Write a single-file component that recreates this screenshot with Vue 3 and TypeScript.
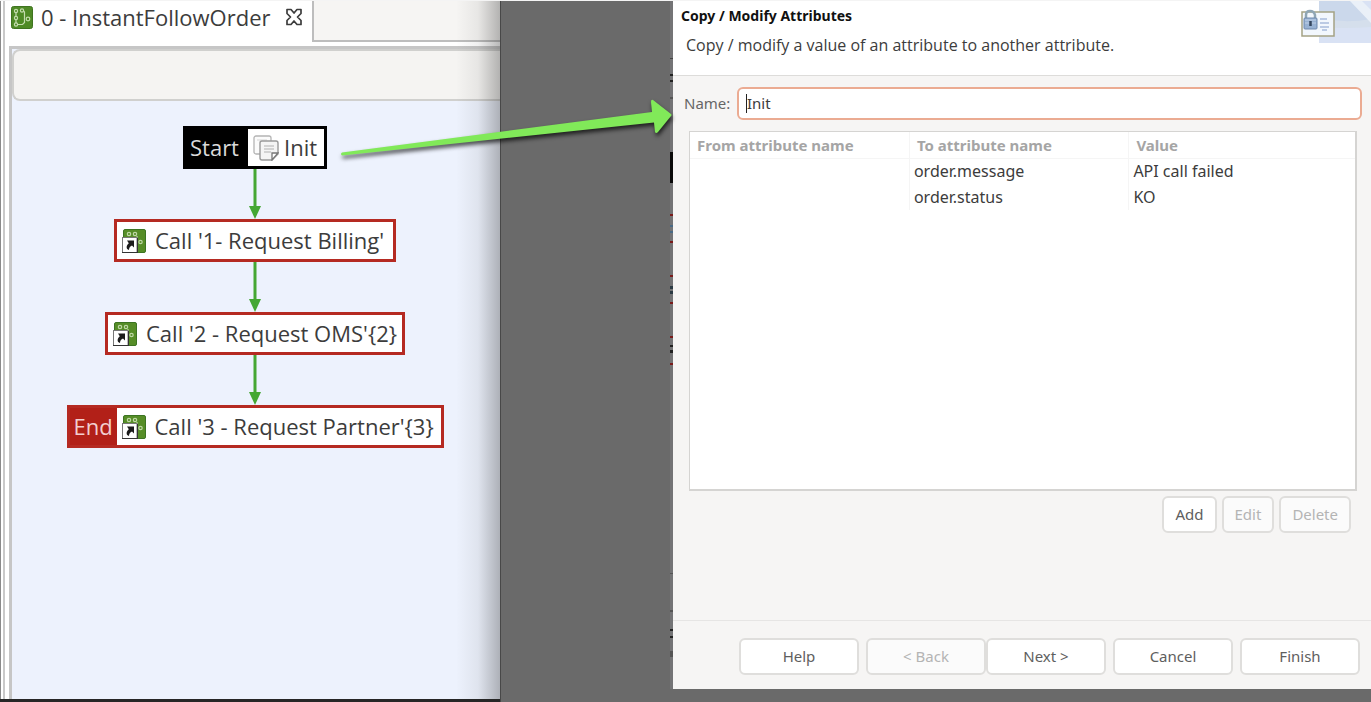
<script setup lang="ts">
import { ref } from 'vue'

interface FlowNode {
  id: string
  label: string
  kind: 'start' | 'call' | 'end'
  tag?: string
}

interface AttributeRow {
  from: string
  to: string
  value: string
}

interface Mark {
  y: number
  h: number
  color: string
}

const nodes: FlowNode[] = [
  { id: 'init', label: 'Init', kind: 'start', tag: 'Start' },
  { id: 'billing', label: "Call '1- Request Billing'", kind: 'call' },
  { id: 'oms', label: "Call '2 - Request OMS'{2}", kind: 'call' },
  { id: 'partner', label: "Call '3 - Request Partner'{3}", kind: 'end', tag: 'End' },
]

const rows: AttributeRow[] = [
  { from: '', to: 'order.message', value: 'API call failed' },
  { from: '', to: 'order.status', value: 'KO' },
]

const marks: Mark[] = [
  { y: 57, h: 1, color: '#444' },
  { y: 73, h: 2, color: '#222' },
  { y: 79, h: 2, color: '#222' },
  { y: 96, h: 2, color: '#555' },
  { y: 151, h: 31, color: '#0a0a0a' },
  { y: 213, h: 2, color: '#7a1a1a' },
  { y: 224, h: 2, color: '#4a6a85' },
  { y: 230, h: 2, color: '#4a6a85' },
  { y: 240, h: 2, color: '#7a1a1a' },
  { y: 274, h: 2, color: '#7a1a1a' },
  { y: 285, h: 3, color: '#2c3a44' },
  { y: 290, h: 3, color: '#2c3a44' },
  { y: 301, h: 2, color: '#7a1a1a' },
  { y: 335, h: 2, color: '#7a1a1a' },
  { y: 344, h: 2, color: '#222' },
  { y: 349, h: 3, color: '#222' },
  { y: 362, h: 2, color: '#7a1a1a' },
  { y: 572, h: 1, color: '#555' },
  { y: 609, h: 2, color: '#555' },
  { y: 628, h: 2, color: '#222' },
  { y: 635, h: 2, color: '#222' },
  { y: 650, h: 6, color: '#555' },
]

const name = ref('Init')
</script>

<template>
  <div class="screen">
    <section class="editor">
      <div class="tabs">
        <div class="tab">
          <svg class="tab-icon" viewBox="0 0 22 23" aria-hidden="true">
            <rect x="0.5" y="0.5" width="21" height="22" rx="2" fill="#4f8a26" stroke="#3f7420" />
            <g fill="none" stroke="#c4dcae" stroke-width="1.2">
              <circle cx="5" cy="5" r="1.6" />
              <circle cx="11" cy="4.5" r="1.6" />
              <circle cx="5" cy="12" r="1.6" />
              <circle cx="5" cy="18.5" r="1.6" />
              <circle cx="17" cy="13" r="1.8" />
              <path d="M5 7v3M5 14v3M7 18.5h4.500l2-2V6l-1-1" />
            </g>
          </svg>
          <span>0 - InstantFollowOrder</span>
          <button class="close" type="button" aria-label="Close tab">
            <svg viewBox="0 0 18 18" aria-hidden="true">
              <path
                d="M2 1.500h4L9 5l3-3.500h4v4L12.500 9l3.500 3.500v4h-4L9 13l-3 3.500H2v-4L5.500 9 2 5.500z"
                fill="#fff" stroke="#3c3c3c" stroke-width="1.700" stroke-linejoin="round"
              />
            </svg>
          </button>
        </div>
        <div class="tab-rest"></div>
      </div>
      <div class="frame">
        <div class="toolbar"></div>
        <div class="canvas">
          <template v-for="(node, index) in nodes" :key="node.id">
            <svg v-if="index > 0" class="link" viewBox="0 0 12 50" aria-hidden="true">
              <path d="M6 0v40" stroke="#45a733" stroke-width="3" />
              <path d="M0 37h12L6 50z" fill="#45a733" />
            </svg>
            <div class="node" :class="[node.kind, node.id]">
              <span v-if="node.tag" class="tag">{{ node.tag }}</span>
              <div class="body">
                <svg v-if="node.kind === 'start'" class="copy-icon" viewBox="0 0 26 26" aria-hidden="true">
                  <rect x="1" y="1" width="17" height="18" rx="2" fill="#fbfbfb" stroke="#b4b4b4" stroke-width="1.300" />
                  <path d="M4 5h10" stroke="#d5d5d5" />
                  <path
                    d="M9 6h14q2 0 2 2v11l-6 6H9q-2 0-2-2V8q0-2 2-2z"
                    fill="#f4f4f4" stroke="#999" stroke-width="1.400"
                  />
                  <path d="M11 11h10M11 14h10M11 17h7" stroke="#b0b0b0" stroke-width="1.200" />
                  <path d="M25 18h-6v7z" fill="#fff" stroke="#777" stroke-width="1.300" />
                </svg>
                <svg v-else class="call-icon" viewBox="0 0 24 24" aria-hidden="true">
                  <rect x="1.500" y="0.500" width="22" height="23" rx="1.500" fill="#568d27" stroke="#3c7422" />
                  <g fill="none" stroke="#bfd8a6" stroke-width="1.200">
                    <circle cx="7" cy="5" r="1.700" />
                    <circle cx="13" cy="5" r="1.700" />
                    <circle cx="18.500" cy="13" r="1.700" />
                    <path d="M15 7v2" />
                  </g>
                  <rect x="0.500" y="8.500" width="14.500" height="15" fill="#fff" stroke="#777" />
                  <path d="M0 23.500h16M15.500 9v15" stroke="#333" />
                  <path d="M5 11.500h7v7l-2-2c-2 1-3 2-3 4.500-3-1-3.200-4-0.200-6.800z" fill="#1b1b1b" />
                </svg>
                <span class="label">{{ node.label }}</span>
              </div>
            </div>
          </template>
        </div>
      </div>
      <div class="edge-shade"></div>
    </section>

    <div class="gap">
      <div class="strip">
        <svg viewBox="0 0 3 701" aria-hidden="true">
          <rect x="0" y="0" width="3" height="688" fill="#747476" />
          <rect v-for="mark in marks" :key="mark.y" x="0" :y="mark.y" width="3" :height="mark.h" :fill="mark.color" />
        </svg>
      </div>
      <svg class="pointer" viewBox="0 0 340 70" aria-hidden="true">
        <path
          d="M11 61.500Q9 63 11 64.500L323 31.500 324 41Q325 43 327 41L340 25Q341 24 340 23L322 9Q320 8 320 11L321 21z"
          fill="#81e959"
        />
      </svg>
    </div>

    <section class="dialog" aria-labelledby="dialog-title">
      <header class="head">
        <div>
          <h1 id="dialog-title">Copy / Modify Attributes</h1>
          <p>Copy / modify a value of an attribute to another attribute.</p>
        </div>
        <svg class="banner" viewBox="0 0 70 42" aria-hidden="true">
          <rect x="18" y="0" width="52" height="42" fill="#d9e2f4" />
          <path d="M18 0h35l22 26-57-2z" fill="#cbd8eb" />
          <path d="M18 17q26 6 52 1v8q-26 2-52 0z" fill="#d5dfec" />
          <path d="M49 0h12l9 9v13z" fill="#eaf0f8" />
          <rect x="1" y="11" width="32" height="24" fill="#f2f7fd" stroke="#a4a284" stroke-width="1.500" />
          <path d="M19 18h7M19 22h9M19 26h9M21 29h5" stroke="#a9bcdb" stroke-width="1.300" />
          <path d="M5 18v-4q0-4 4-4t5 4v4" fill="none" stroke="#8fa6b4" stroke-width="2.500" />
          <rect x="3" y="17" width="13" height="11" rx="1" fill="#98b2d3" stroke="#6f89ad" />
          <path d="M4 19h11M4 22h11" stroke="#bfd0e6" />
          <path d="M9.500 20v5" stroke="#35465e" stroke-width="2.500" />
        </svg>
      </header>

      <div class="content">
        <div class="name-row">
          <label for="attr-name">Name:</label>
          <div class="field">
            <input id="attr-name" v-model="name" type="text" />
            <span class="caret"></span>
          </div>
        </div>
        <div class="list">
          <table>
            <thead>
              <tr>
                <th scope="col">From attribute name</th>
                <th scope="col">To attribute name</th>
                <th scope="col">Value</th>
              </tr>
            </thead>
            <tbody>
              <tr v-for="row in rows" :key="row.to">
                <td>{{ row.from }}</td>
                <td>{{ row.to }}</td>
                <td>{{ row.value }}</td>
              </tr>
            </tbody>
          </table>
        </div>
        <div class="row-actions">
          <button type="button">Add</button>
          <button type="button" disabled>Edit</button>
          <button type="button" disabled>Delete</button>
        </div>
      </div>

      <footer class="foot">
        <button type="button">Help</button>
        <div class="pair">
          <button type="button" disabled>&lt; Back</button>
          <button type="button">Next &gt;</button>
        </div>
        <button type="button">Cancel</button>
        <button type="button">Finish</button>
      </footer>
    </section>
  </div>
</template>

<style>
html,
body {
  background: #6a6a6a;
}
</style>

<style scoped>
.screen {
  box-sizing: border-box;
  display: grid;
  grid-template-columns: minmax(0, 500fr) minmax(0, 173fr) minmax(0, 698fr);
  min-height: 100vh;
  border-top: 1px solid #f4f4f4;
  background: #6a6a6a;
  font-family: 'Open Sans', 'Noto Sans', sans-serif;
  color: #3c3c3c;
}

.screen * {
  box-sizing: border-box;
}

button,
input {
  font: inherit;
  color: inherit;
}

.editor {
  position: relative;
  display: flex;
  flex-direction: column;
  overflow: hidden;
  border-bottom: 3px solid #262626;
  background: linear-gradient(90deg, #8a8a8a 1px, #fff 1px, #fff 3px, #c9c9c9 3px, #c9c9c9 5px, #fff 5px);
}

.tabs {
  display: flex;
  height: 41px;
  margin-left: 5px;
}

.tab {
  display: flex;
  align-items: center;
  gap: 8px;
  width: 307px;
  padding: 0 6px 9px;
  font-size: 22px;
  white-space: nowrap;
}

.tab-icon {
  width: 22px;
  height: 23px;
}

.close {
  display: flex;
  margin-left: 6px;
  padding: 0;
  border: 0;
  background: none;
}

.close svg {
  width: 18px;
  height: 18px;
}

.tab-rest {
  flex: 1;
  border-left: 2px solid #bdbdbd;
  border-bottom: 2px solid #bdbdbd;
  background: #f6f5f3;
}

.frame {
  display: flex;
  flex: 1;
  flex-direction: column;
  margin: 4px 0 0 9px;
  border: solid #c6c6c6;
  border-width: 3px 0 0 3px;
  background: #edf2fd;
}

.toolbar {
  height: 52px;
  border: 2px solid #d0d0ce;
  border-right: 0;
  border-radius: 8px 0 0 8px;
  background: #f5f4f2;
}

.canvas {
  display: flex;
  flex: 1;
  flex-direction: column;
  align-items: center;
  padding: 25px 2px 24px 0;
}

.link {
  flex: none;
  width: 12px;
  height: 50px;
}

.node {
  display: flex;
  height: 43px;
  border: 3px solid #b52a22;
  background: #fff;
  font-size: 22px;
  line-height: 36px;
  white-space: nowrap;
}

.billing {
  width: 282px;
}

.oms {
  width: 300px;
}

.partner {
  width: 377px;
}

.init {
  width: 144px;
}

.start {
  border-color: #000;
}

.tag {
  flex: none;
  width: 62px;
  padding-left: 4px;
  background: #000;
  color: #dadada;
}

.end .tag {
  width: 47px;
  background: #b22018;
  color: #f3cfd0;
}

.body {
  display: flex;
  flex: 1;
  align-items: center;
  gap: 9px;
  padding-left: 5px;
}

.label {
  padding-bottom: 2px;
}

.call-icon {
  flex: none;
  width: 24px;
  height: 24px;
}

.copy-icon {
  flex: none;
  width: 26px;
  height: 26px;
}

.start .body {
  gap: 5px;
}

.edge-shade {
  position: absolute;
  top: 0;
  right: 0;
  bottom: 0;
  width: 44px;
  background: linear-gradient(90deg, rgba(60, 60, 60, 0), rgba(60, 60, 60, 0.08) 50%, rgba(50, 50, 50, 0.34));
}

.gap {
  position: relative;
  border-left: 1px solid #484848;
}

.strip {
  display: flex;
  justify-content: flex-end;
}

.strip svg {
  width: 3px;
  height: 701px;
}

.pointer {
  position: absolute;
  top: 90px;
  right: 2px;
  width: 340px;
  height: 70px;
  overflow: visible;
  filter: drop-shadow(1px 3px 2px rgba(0, 0, 0, 0.7));
}

.dialog {
  display: flex;
  flex-direction: column;
  margin-bottom: 13px;
  background: #f6f5f4;
  font-family: 'Noto Sans', 'Open Sans', sans-serif;
  font-size: 15px;
  line-height: 20px;
}

.head {
  display: flex;
  justify-content: space-between;
  height: 75px;
  padding-left: 8px;
  border-bottom: 1px solid #dddcda;
  background: #fff;
}

.head h1 {
  margin: 5px 0 0;
  font-size: 14px;
  line-height: 20px;
  color: #111;
}

.head p {
  margin: 9px 0 0 5px;
  font-family: 'Open Sans', 'Noto Sans', sans-serif;
  font-size: 16px;
}

.banner {
  width: 70px;
  height: 42px;
}

.content {
  display: flex;
  flex: 1;
  flex-direction: column;
  padding: 11px 9px 0 11px;
}

.name-row {
  display: flex;
  align-items: center;
  gap: 7px;
  color: #666;
}

.name-row label {
  width: 46px;
  padding-bottom: 2px;
}

.field {
  position: relative;
  flex: 1;
}

.field input {
  display: block;
  width: 100%;
  height: 33px;
  padding: 0 8px 2px;
  border: 2px solid #ebab92;
  border-radius: 6px;
  outline: 0;
  background: #fff;
  color: #3c3c3c;
}

.caret {
  position: absolute;
  top: 7px;
  left: 9px;
  width: 1px;
  height: 19px;
  background: #222;
}

.list {
  height: 360px;
  margin: 11px 5px 0;
  border: 2px solid #d5d4d2;
  border-width: 1px 2px 2px 1px;
  background: #fff;
}

table {
  width: 100%;
  border-collapse: collapse;
  table-layout: fixed;
}

th,
td {
  height: 26px;
  padding: 0 0 0 4px;
  border-right: 1px solid #f5f5f5;
  text-align: left;
  font-size: 16px;
  font-weight: 400;
}

th {
  padding-left: 7px;
  border-bottom: 1px solid #f5f5f5;
  color: #a5a5a5;
  font-size: 15px;
  font-weight: 700;
}

th:nth-child(-n + 2) {
  width: 33%;
}

th:last-child,
td:last-child {
  border-right: 0;
}

.row-actions {
  display: flex;
  justify-content: flex-end;
  gap: 5px;
  margin: 5px 11px 0;
}

button:not(.close) {
  height: 37px;
  padding: 0 11px 2px;
  border: 2px solid #dfdedc;
  border-radius: 6px;
  background: #fff;
  color: #5e5e5e;
}

button:not(.close):disabled {
  background: #fbfbfb;
  color: #b4b4b4;
}

.foot {
  display: flex;
  justify-content: flex-end;
  gap: 7px;
  height: 69px;
  padding: 17px 11px 0;
  border-top: 1px solid #e6e5e4;
}

.foot button:not(.close) {
  width: 120px;
}

.pair {
  display: flex;
}
</style>
